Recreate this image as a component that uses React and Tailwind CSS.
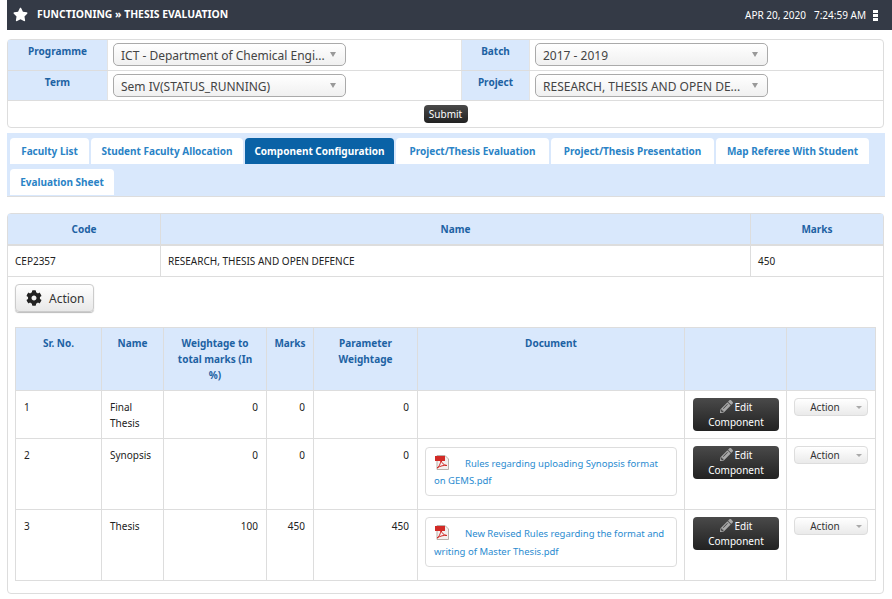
import { FaStar, FaCog, FaPencilAlt } from 'react-icons/fa'

const font = "font-['Noto_Sans',sans-serif]"

function Select({ text }) {
  return (
    <div className="flex h-[23px] w-[233px] items-center justify-between rounded-[5px] border border-[#aaaaaa] bg-gradient-to-b from-white to-[#f0f0f0] pl-[7px] pr-[9px] text-[12px] text-[#444444]">
      <span className="whitespace-nowrap pt-[2px]">{text}</span>
      <span className="h-0 w-0 border-x-[3px] border-t-[5px] border-x-transparent border-t-[#999999]" />
    </div>
  )
}

function FilterRow({ left, leftValue, right, rightValue, height }) {
  return (
    <div className={`flex ${height} border-b border-[#dddddd]`}>
      <div className="w-[100px] border-r border-[#e4e4e4] bg-[#d9e8fc] pt-[4px] text-center text-[10px] font-bold text-[#1d62a3]">{left}</div>
      <div className="w-[353px] pl-[5px] pt-[3px]">
        <Select text={leftValue} />
      </div>
      <div className="w-[69px] border-x border-[#e4e4e4] bg-[#d9e8fc] pt-[4px] text-center text-[10px] font-bold text-[#1d62a3]">{right}</div>
      <div className="flex-1 pl-[5px] pt-[3px]">
        <Select text={rightValue} />
      </div>
    </div>
  )
}

function Tab({ label, active, width }) {
  return (
    <div
      className={
        active
          ? 'flex h-[26px] items-center justify-center rounded-t-[4px] bg-[#0a62a6] text-[10px] font-bold text-white'
          : 'flex h-[26px] items-center justify-center rounded-t-[4px] bg-white text-[10px] font-bold text-[#2a83c6]'
      }
      style={{ width }}
    >
      {label}
    </div>
  )
}

function PdfIcon() {
  return (
    <svg width="15" height="15" viewBox="0 0 15 15" className="ml-[1px] inline-block align-[-3px]">
      <path d="M2 .5h8l3.500 3.500v10.500h-11.500z" fill="#f4f0ee" stroke="#b9b0aa" />
      <path d="M0 1h10v5H0z" fill="#d22a26" />
      <path d="M2 13c2-1 3.500-4 4-8 .5 3 2.500 5 6 5.500-3-.5-7 .5-10 2.500z" fill="none" stroke="#d22a26" />
    </svg>
  )
}

function EditButton() {
  return (
    <div className="w-[86px] rounded-[4px] bg-gradient-to-b from-[#4a4a4a] to-[#222222] pb-[1px] text-center text-[10px] leading-[15px] text-white">
      <div className="pt-[2px]">
        <FaPencilAlt className="mr-[2px] inline-block align-[-2px] text-[13px] text-[#a8a8a8]" />
        Edit
      </div>
      <div>Component</div>
    </div>
  )
}

function ActionButton() {
  return (
    <div className="relative h-[18px] w-[74px] rounded-[4px] border border-[#dddddd] bg-gradient-to-b from-white to-[#eaeaea] pr-[12px] text-center text-[10px] leading-[16px] text-[#333333]">
      Action
      <span className="absolute right-[5px] top-[7px] h-0 w-0 border-x-[3px] border-t-[3px] border-x-transparent border-t-[#aaaaaa]" />
    </div>
  )
}

function DocCard({ text, tall }) {
  return (
    <div className={tall ? 'h-[50px] rounded-[4px] border border-[#dddddd] px-[8px] pt-[7px] text-[9.5px] leading-[18px] text-[#2a8bd0]' : 'h-[49px] rounded-[4px] border border-[#dddddd] px-[8px] pt-[7px] text-[9.5px] leading-[17px] text-[#2a8bd0]'}>
      <PdfIcon />
      <span className="ml-[15px]">{text}</span>
    </div>
  )
}

const th = 'border border-[#dddddd] bg-[#d9e8fc] px-[7px] pt-[7px] align-top text-center text-[10px] font-bold leading-[16px] text-[#1d62a3]'
const td = 'border border-[#dddddd] px-[8px] pt-[8px] align-top text-[10px] leading-[16px] text-[#222222]'
const tdNum = 'border border-[#dddddd] px-[8px] pt-[8px] align-top text-right text-[10px] leading-[16px] text-[#222222]'
const tdBtn = 'border border-[#dddddd] pl-[8px] pt-[7px] align-top'

const rows = [
  { n: 1, name: 'Final Thesis', w: 0, m: 0, p: 0, h: 'h-[48px]' },
  { n: 2, name: 'Synopsis', w: 0, m: 0, p: 0, h: 'h-[71px]', doc: 'Rules regarding uploading Synopsis format on GEMS.pdf' },
  { n: 3, name: 'Thesis', w: 100, m: 450, p: 450, h: 'h-[71px]', doc: 'New Revised Rules regarding the format and writing of Master Thesis.pdf', tall: true },
]

export default function App() {
  return (
    <div className={`${font} h-[599px] w-[892px] overflow-hidden bg-white`}>
      <div className="ml-[7px] flex h-[30px] items-center justify-between bg-[#343a46] pl-[6px] pr-[14px] text-white">
        <div className="flex items-center">
          <FaStar className="text-[15px]" />
          <span className="ml-[9px] text-[10.4px] font-bold">FUNCTIONING » THESIS EVALUATION</span>
        </div>
        <div className="flex items-center text-[10px]">
          <span>APR 20, 2020</span>
          <span className="ml-[8px]">7:24:59 AM</span>
          <span className="ml-[7px] flex flex-col gap-[1px]">
            <span className="h-[3px] w-[5px] bg-white" />
            <span className="h-[3px] w-[5px] bg-white" />
            <span className="h-[3px] w-[5px] bg-white" />
          </span>
        </div>
      </div>

      <div className="mx-[7px] mt-[9px] w-[877px] rounded-[4px] border border-[#dddddd]">
        <FilterRow height="h-[31px]" left="Programme" leftValue="ICT - Department of Chemical Engi..." right="Batch" rightValue="2017 - 2019" />
        <FilterRow height="h-[30px]" left="Term" leftValue="Sem IV(STATUS_RUNNING)" right="Project" rightValue="RESEARCH, THESIS AND OPEN DE..." />
        <div className="flex h-[26px] items-center justify-center">
          <div className="flex h-[18px] w-[44px] items-center justify-center rounded-[4px] bg-gradient-to-b from-[#4a4a4a] to-[#222222] text-[10px] text-white">Submit</div>
        </div>
      </div>

      <div className="mx-[7px] mt-[5px] flex h-[64px] w-[878px] flex-wrap content-start gap-x-[2px] gap-y-[5px] border-b border-[#dddddd] bg-[#d9e8fc] pl-[3px] pt-[5px]">
        <Tab label="Faculty List" width={79} />
        <Tab label="Student Faculty Allocation" width={152} />
        <Tab label="Component Configuration" width={149} active />
        <Tab label="Project/Thesis Evaluation" width={153} />
        <Tab label="Project/Thesis Presentation" width={163} />
        <Tab label="Map Referee With Student" width={153} />
        <Tab label="Evaluation Sheet" width={104} />
      </div>

      <div className="mx-[7px] mt-[16px] h-[381px] w-[877px] rounded-[4px] border border-[#dddddd]">
        <div className="flex h-[32px] border-b-[2px] border-[#dddddd] bg-[#d9e8fc] text-[10px] font-bold text-[#1d62a3]">
          <div className="flex w-[153px] items-center justify-center border-r border-[#dddddd]">Code</div>
          <div className="flex w-[590px] items-center justify-center border-r border-[#dddddd]">Name</div>
          <div className="flex flex-1 items-center justify-center">Marks</div>
        </div>
        <div className="flex h-[31px] border-b border-[#dddddd] text-[10px] text-[#222222]">
          <div className="flex w-[153px] items-center border-r border-[#dddddd] pl-[7px]">CEP2357</div>
          <div className="flex w-[590px] items-center border-r border-[#dddddd] pl-[7px]">RESEARCH, THESIS AND OPEN DEFENCE</div>
          <div className="flex flex-1 items-center pl-[7px]">450</div>
        </div>
        <div className="ml-[7px] mt-[7px] flex h-[28px] w-[79px] items-center rounded-[4px] border border-[#cccccc] bg-gradient-to-b from-white to-[#e8e8e8] pl-[10px] text-[12px] text-[#333333] shadow-[0_1px_1px_#bbbbbb]">
          <FaCog className="text-[16px] text-[#222222]" />
          <span className="ml-[7px] pt-[1px]">Action</span>
        </div>

        <table className="ml-[7px] mt-[15px] w-[860px] table-fixed border-collapse">
          <colgroup>
            <col className="w-[86px]" />
            <col className="w-[62px]" />
            <col className="w-[103px]" />
            <col className="w-[47px]" />
            <col className="w-[104px]" />
            <col className="w-[267px]" />
            <col className="w-[102px]" />
            <col className="w-[89px]" />
          </colgroup>
          <thead>
            <tr className="h-[63px]">
              <th className={th}>Sr. No.</th>
              <th className={th}>Name</th>
              <th className={th}>Weightage to total marks (In %)</th>
              <th className={th}>Marks</th>
              <th className={th}>Parameter Weightage</th>
              <th className={th}>Document</th>
              <th className={th}></th>
              <th className={th}></th>
            </tr>
          </thead>
          <tbody>
            {rows.map((r) => (
              <tr key={r.n} className={r.h}>
                <td className={td}>{r.n}</td>
                <td className={td}>{r.name}</td>
                <td className={tdNum}>{r.w}</td>
                <td className={tdNum}>{r.m}</td>
                <td className={tdNum}>{r.p}</td>
                <td className={r.tall ? 'border border-[#dddddd] px-[7px] pt-[7px] align-top' : 'border border-[#dddddd] px-[7px] pt-[8px] align-top'}>
                  {r.doc && <DocCard text={r.doc} tall={r.tall} />}
                </td>
                <td className={tdBtn}><EditButton /></td>
                <td className="border border-[#dddddd] pl-[7px] pt-[7px] align-top"><ActionButton /></td>
              </tr>
            ))}
          </tbody>
        </table>
      </div>
    </div>
  )
}
